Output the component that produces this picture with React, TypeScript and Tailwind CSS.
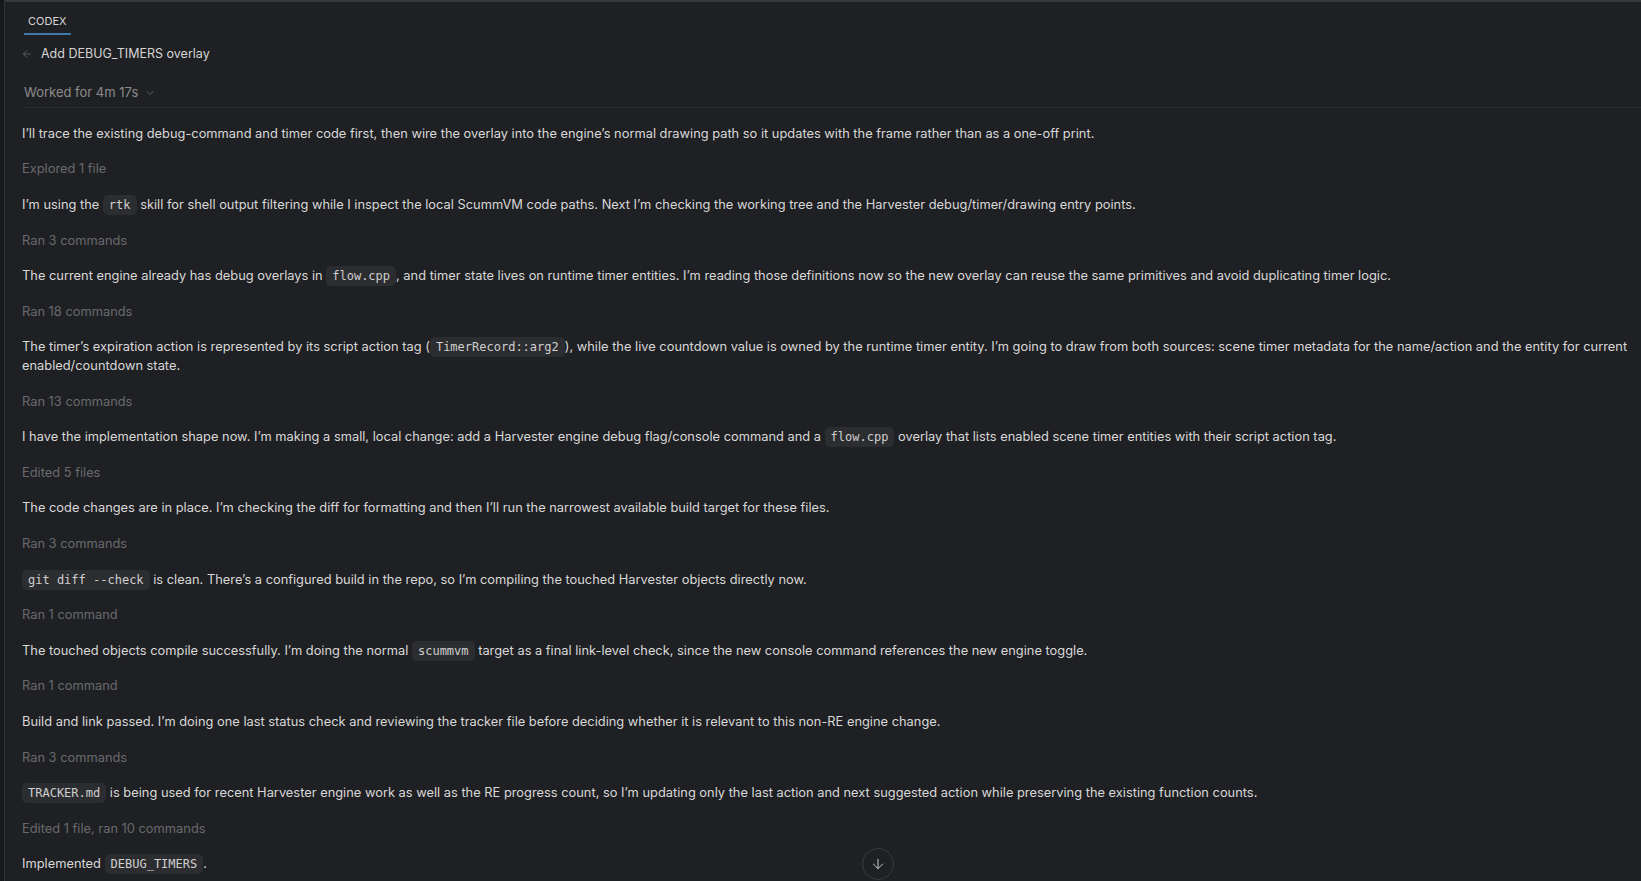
import { ArrowLeft, ArrowDown, ChevronDown } from "lucide-react"

type Part = string | { code: string }

interface Item {
  kind: "text" | "meta"
  parts: Part[]
}

const items: Item[] = [
  { kind: "text", parts: ["I\u2019ll trace the existing debug-command and timer code first, then wire the overlay into the engine\u2019s normal drawing path so it updates with the frame rather than as a one-off print."] },
  { kind: "meta", parts: ["Explored 1 file"] },
  { kind: "text", parts: ["I\u2019m using the ", { code: "rtk" }, " skill for shell output filtering while I inspect the local ScummVM code paths. Next I\u2019m checking the working tree and the Harvester debug/timer/drawing entry points."] },
  { kind: "meta", parts: ["Ran 3 commands"] },
  { kind: "text", parts: ["The current engine already has debug overlays in ", { code: "flow.cpp" }, ", and timer state lives on runtime timer entities. I\u2019m reading those definitions now so the new overlay can reuse the same primitives and avoid duplicating timer logic."] },
  { kind: "meta", parts: ["Ran 18 commands"] },
  { kind: "text", parts: ["The timer\u2019s expiration action is represented by its script action tag (", { code: "TimerRecord::arg2" }, "), while the live countdown value is owned by the runtime timer entity. I\u2019m going to draw from both sources: scene timer metadata for the name/action and the entity for current enabled/countdown state."] },
  { kind: "meta", parts: ["Ran 13 commands"] },
  { kind: "text", parts: ["I have the implementation shape now. I\u2019m making a small, local change: add a Harvester engine debug flag/console command and a ", { code: "flow.cpp" }, " overlay that lists enabled scene timer entities with their script action tag."] },
  { kind: "meta", parts: ["Edited 5 files"] },
  { kind: "text", parts: ["The code changes are in place. I\u2019m checking the diff for formatting and then I\u2019ll run the narrowest available build target for these files."] },
  { kind: "meta", parts: ["Ran 3 commands"] },
  { kind: "text", parts: [{ code: "git diff --check" }, " is clean. There\u2019s a configured build in the repo, so I\u2019m compiling the touched Harvester objects directly now."] },
  { kind: "meta", parts: ["Ran 1 command"] },
  { kind: "text", parts: ["The touched objects compile successfully. I\u2019m doing the normal ", { code: "scummvm" }, " target as a final link-level check, since the new console command references the new engine toggle."] },
  { kind: "meta", parts: ["Ran 1 command"] },
  { kind: "text", parts: ["Build and link passed. I\u2019m doing one last status check and reviewing the tracker file before deciding whether it is relevant to this non-RE engine change."] },
  { kind: "meta", parts: ["Ran 3 commands"] },
  { kind: "text", parts: [{ code: "TRACKER.md" }, " is being used for recent Harvester engine work as well as the RE progress count, so I\u2019m updating only the last action and next suggested action while preserving the existing function counts."] },
  { kind: "meta", parts: ["Edited 1 file, ran 10 commands"] },
  { kind: "text", parts: ["Implemented ", { code: "DEBUG_TIMERS" }, "."] },
]

function Code({ children }: { children: string }) {
  return (
    <code className="rounded-[5px] bg-[#2c2d30] px-[6px] py-[3px] font-['DejaVu_Sans_Mono',monospace] text-[12px] leading-[12px] text-[#cfcfcf]">
      {children}
    </code>
  )
}

export default function App() {
  return (
    <div className="flex h-[881px] w-full overflow-hidden bg-[#1f2023] font-['Inter',sans-serif]">
      <div className="w-[5px] shrink-0 border-r border-[#303134] bg-[#18191b]" />
      <div className="relative flex flex-1 flex-col border-t-2 border-[#37383b]">
        <div className="flex pl-[19px] pt-[11px]">
          <div className="border-b-2 border-[#3f7ba8] px-[4px] pb-[3px] text-[11px] text-[#d6d6d6]">CODEX</div>
        </div>

        <div className="flex items-center gap-[8px] pl-[16px] pt-[10px] text-[12.5px] text-[#d4d4d4]">
          <ArrowLeft className="h-[12px] w-[12px] text-[#6c6c6c]" strokeWidth={1.5} />
          <span>Add DEBUG_TIMERS overlay</span>
        </div>

        <div className="ml-[17px] flex items-center gap-[6px] border-b border-[#2a2b2e] pb-[4px] pl-[2px] pt-[20px] text-[13px] text-[#8c8c8c]">
          <span>Worked for 4m 17s</span>
          <ChevronDown className="h-[12px] w-[12px] text-[#7a7a7a]" strokeWidth={1.5} />
        </div>

        <div className="flex flex-col gap-[16.8px] pl-[17px] pr-[10px] pt-[17px] text-[12.85px] leading-[18.8px]">
          {items.map((item, i) => (
            <p key={i} className={item.kind === "meta" ? "text-[#696a6d]" : "text-[#d8d8d8]"}>
              {item.parts.map((p, j) =>
                typeof p === "string" ? <span key={j}>{p}</span> : <Code key={j}>{p.code}</Code>
              )}
            </p>
          ))}
        </div>

        <button className="absolute bottom-[1px] left-[857px] flex h-[32px] w-[32px] items-center justify-center rounded-full border border-[#3a3b3e] bg-[#1f2023]">
          <ArrowDown className="h-[16px] w-[16px] text-[#c8c8c8]" strokeWidth={1.5} />
        </button>
      </div>
    </div>
  )
}
